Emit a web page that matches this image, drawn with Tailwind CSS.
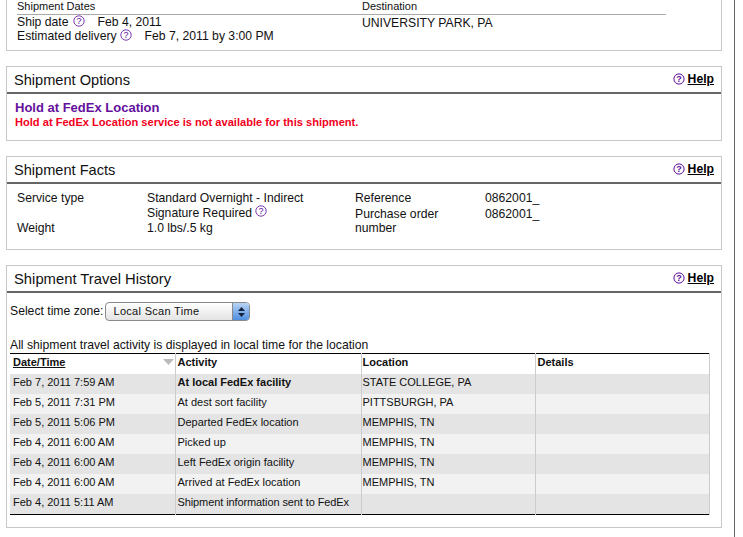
<!DOCTYPE html>
<html lang="en">
<head>
<meta charset="UTF-8">
<title>Shipment Details</title>
<script src="https://cdn.jsdelivr.net/npm/@tailwindcss/browser@4"></script>
</head>
<body class="bg-white overflow-hidden">
<div class="w-[735px] h-[537px] border-r border-[#666] pl-[6px] font-['Liberation_Sans',Arial,sans-serif] text-[#111] text-[12.2px] leading-[14px]">
  <div class="w-[716px] flex flex-col gap-[15px]">

    <!-- summary -->
    <div class="h-[51px] border-x border-b border-[#c8c8c8] flex pl-[10px]">
      <div class="w-[345px]">
        <div class="h-[15px] text-[11px] leading-[12px] border-b border-[#aaa]">Shipment Dates</div>
        <div class="flex items-center h-[14px]">Ship date
          <svg class="ml-[4px] mb-[2px]" width="12" height="12" viewBox="0 0 12 12"><circle cx="6" cy="6" r="5.2" fill="none" stroke="#5e0a9c" stroke-width="0.8"/><text x="6" y="9.200" text-anchor="middle" font-size="9" fill="#5e0a9c">?</text></svg>
          <span class="ml-[13px]">Feb 4, 2011</span></div>
        <div class="flex items-center h-[14px]">Estimated delivery
          <svg class="ml-[3px] mb-[2px]" width="12" height="12" viewBox="0 0 12 12"><circle cx="6" cy="6" r="5.2" fill="none" stroke="#5e0a9c" stroke-width="0.8"/><text x="6" y="9.200" text-anchor="middle" font-size="9" fill="#5e0a9c">?</text></svg>
          <span class="ml-[13px]">Feb 7, 2011 by 3:00 PM</span></div>
      </div>
      <div class="w-[304px]">
        <div class="h-[15px] text-[11px] leading-[12px] border-b border-[#aaa]">Destination</div>
        <div class="h-[14px] mt-px">UNIVERSITY PARK, PA</div>
      </div>
    </div>

    <!-- options -->
    <div class="h-[75px] border border-[#c8c8c8]">
      <div class="h-[27px] border-b-2 border-[#666] flex items-center justify-between pl-[7px] pr-[7px]">
        <span class="text-[14.6px]">Shipment Options</span>
        <span class="flex items-center gap-[3px] font-bold mb-[2px]"><svg width="12" height="12" viewBox="0 0 12 12"><circle cx="6" cy="6" r="5.1" fill="none" stroke="#5e0a9c" stroke-width="1"/><text x="6" y="9.200" text-anchor="middle" font-size="9" fill="#5e0a9c">?</text></svg><a class="underline text-black">Help</a></span>
      </div>
      <div class="pl-[8px] pt-[6px]">
        <div class="text-[#64109c] font-bold text-[13px] leading-[16px]">Hold at FedEx Location</div>
        <div class="text-[#f0001c] font-bold text-[11.1px] leading-[12px]">Hold at FedEx Location service is not available for this shipment.</div>
      </div>
    </div>

    <!-- facts -->
    <div class="h-[94px] border border-[#c8c8c8]">
      <div class="h-[27px] border-b-2 border-[#666] flex items-center justify-between pl-[7px] pr-[7px]">
        <span class="text-[14.6px]">Shipment Facts</span>
        <span class="flex items-center gap-[3px] font-bold mb-[2px]"><svg width="12" height="12" viewBox="0 0 12 12"><circle cx="6" cy="6" r="5.1" fill="none" stroke="#5e0a9c" stroke-width="1"/><text x="6" y="9.200" text-anchor="middle" font-size="9" fill="#5e0a9c">?</text></svg><a class="underline text-black">Help</a></span>
      </div>
      <div class="flex pl-[10px] pt-[7px]">
        <div class="w-[130px]">
          <div class="h-[30px]">Service type</div>
          <div>Weight</div>
        </div>
        <div class="w-[208px]">
          <div>Standard Overnight - Indirect</div>
          <div class="flex items-center h-[16px]">Signature Required<svg class="ml-[3px] mb-[4px]" width="12" height="12" viewBox="0 0 12 12"><circle cx="6" cy="6" r="5.2" fill="none" stroke="#5e0a9c" stroke-width="0.8"/><text x="6" y="9.200" text-anchor="middle" font-size="9" fill="#5e0a9c">?</text></svg></div>
          <div>1.0 lbs/.5 kg</div>
        </div>
        <div class="w-[130px]">
          <div class="h-[16px]">Reference</div>
          <div class="w-[110px]">Purchase order number</div>
        </div>
        <div>
          <div class="h-[16px]">0862001_</div>
          <div>0862001_</div>
        </div>
      </div>
    </div>

    <!-- travel history -->
    <div class="h-[263px] border border-[#c8c8c8]">
      <div class="h-[27px] border-b-2 border-[#666] flex items-center justify-between pl-[7px] pr-[7px]">
        <span class="text-[14.8px]">Shipment Travel History</span>
        <span class="flex items-center gap-[3px] font-bold mb-[2px]"><svg width="12" height="12" viewBox="0 0 12 12"><circle cx="6" cy="6" r="5.1" fill="none" stroke="#5e0a9c" stroke-width="1"/><text x="6" y="9.200" text-anchor="middle" font-size="9" fill="#5e0a9c">?</text></svg><a class="underline text-black">Help</a></span>
      </div>
      <div class="pl-[3px] pt-[9px]">
        <div class="flex items-center h-[19px] gap-[2px]">
          <span class="mb-px">Select time zone:</span>
          <div class="w-[145px] h-[19px] rounded-[4px] border border-[#8a8a8a] flex overflow-hidden bg-gradient-to-b from-white to-[#e4e4e4]">
            <span class="flex-1 pl-[7px] text-[11px] leading-[17px] tracking-[0.3px]">Local Scan Time</span>
            <span class="w-[17px] flex flex-col items-center justify-center gap-[2px] bg-gradient-to-b from-[#b8d4f4] to-[#4f8fe0] border-l border-[#8a8a8a]">
              <svg width="7" height="4" viewBox="0 0 7 4"><path d="M3.5 0 7 4H0z" fill="#14233f"/></svg>
              <svg width="7" height="4" viewBox="0 0 7 4"><path d="M0 0h7L3.5 4z" fill="#14233f"/></svg>
            </span>
          </div>
        </div>
        <div class="mt-[17px] h-[15px]">All shipment travel activity is displayed in local time for the location</div>
        <table class="w-[699px] table-fixed border-collapse border-y border-black text-[11px] leading-[16px]">
          <colgroup><col class="w-[165px]"><col class="w-[186px]"><col class="w-[174px]"><col class="w-[174px]"></colgroup>
          <thead>
            <tr class="h-[20px] font-bold text-left">
              <th class="relative pl-[3px] pb-[4px] border-r border-[#ccc]"><span class="underline">Date/Time</span><svg class="absolute right-[1px] top-[5px]" width="11" height="6" viewBox="0 0 11 6"><path d="M0 0h11L5.500 6z" fill="#bbb"/></svg></th>
              <th class="pl-[2px] pb-[4px] border-r border-[#ccc]">Activity</th>
              <th class="pl-px pb-[4px] border-r border-[#ccc]">Location</th>
              <th class="pl-[2px] pb-[4px] border-r border-[#ccc]">Details</th>
            </tr>
          </thead>
          <tbody>
            <tr class="h-[20px] bg-[#e4e4e4]"><td class="pl-[3px] pb-[4px] border-r border-[#ccc]">Feb 7, 2011 7:59 AM</td><td class="pl-[2px] pb-[4px] border-r border-[#ccc] font-bold">At local FedEx facility</td><td class="pl-px pb-[4px] border-r border-[#ccc]">STATE COLLEGE, PA</td><td class="border-r border-[#ccc]"></td></tr>
            <tr class="h-[20px] bg-[#f2f2f2]"><td class="pl-[3px] pb-[4px] border-r border-[#ccc]">Feb 5, 2011 7:31 PM</td><td class="pl-[2px] pb-[4px] border-r border-[#ccc]">At dest sort facility</td><td class="pl-px pb-[4px] border-r border-[#ccc]">PITTSBURGH, PA</td><td class="border-r border-[#ccc]"></td></tr>
            <tr class="h-[20px] bg-[#e4e4e4]"><td class="pl-[3px] pb-[4px] border-r border-[#ccc]">Feb 5, 2011 5:06 PM</td><td class="pl-[2px] pb-[4px] border-r border-[#ccc]">Departed FedEx location</td><td class="pl-px pb-[4px] border-r border-[#ccc]">MEMPHIS, TN</td><td class="border-r border-[#ccc]"></td></tr>
            <tr class="h-[20px] bg-[#f2f2f2]"><td class="pl-[3px] pb-[4px] border-r border-[#ccc]">Feb 4, 2011 6:00 AM</td><td class="pl-[2px] pb-[4px] border-r border-[#ccc]">Picked up</td><td class="pl-px pb-[4px] border-r border-[#ccc]">MEMPHIS, TN</td><td class="border-r border-[#ccc]"></td></tr>
            <tr class="h-[20px] bg-[#e4e4e4]"><td class="pl-[3px] pb-[4px] border-r border-[#ccc]">Feb 4, 2011 6:00 AM</td><td class="pl-[2px] pb-[4px] border-r border-[#ccc]">Left FedEx origin facility</td><td class="pl-px pb-[4px] border-r border-[#ccc]">MEMPHIS, TN</td><td class="border-r border-[#ccc]"></td></tr>
            <tr class="h-[20px] bg-[#f2f2f2]"><td class="pl-[3px] pb-[4px] border-r border-[#ccc]">Feb 4, 2011 6:00 AM</td><td class="pl-[2px] pb-[4px] border-r border-[#ccc]">Arrived at FedEx location</td><td class="pl-px pb-[4px] border-r border-[#ccc]">MEMPHIS, TN</td><td class="border-r border-[#ccc]"></td></tr>
            <tr class="h-[20px] bg-[#e4e4e4]"><td class="pl-[3px] pb-[4px] border-r border-[#ccc]">Feb 4, 2011 5:11 AM</td><td class="pl-[2px] pb-[4px] border-r border-[#ccc] tracking-[-0.1px]">Shipment information sent to FedEx</td><td class="pl-px border-r border-[#ccc]"></td><td class="border-r border-[#ccc]"></td></tr>
          </tbody>
        </table>
      </div>
    </div>

  </div>
</div>
</body>
</html>
